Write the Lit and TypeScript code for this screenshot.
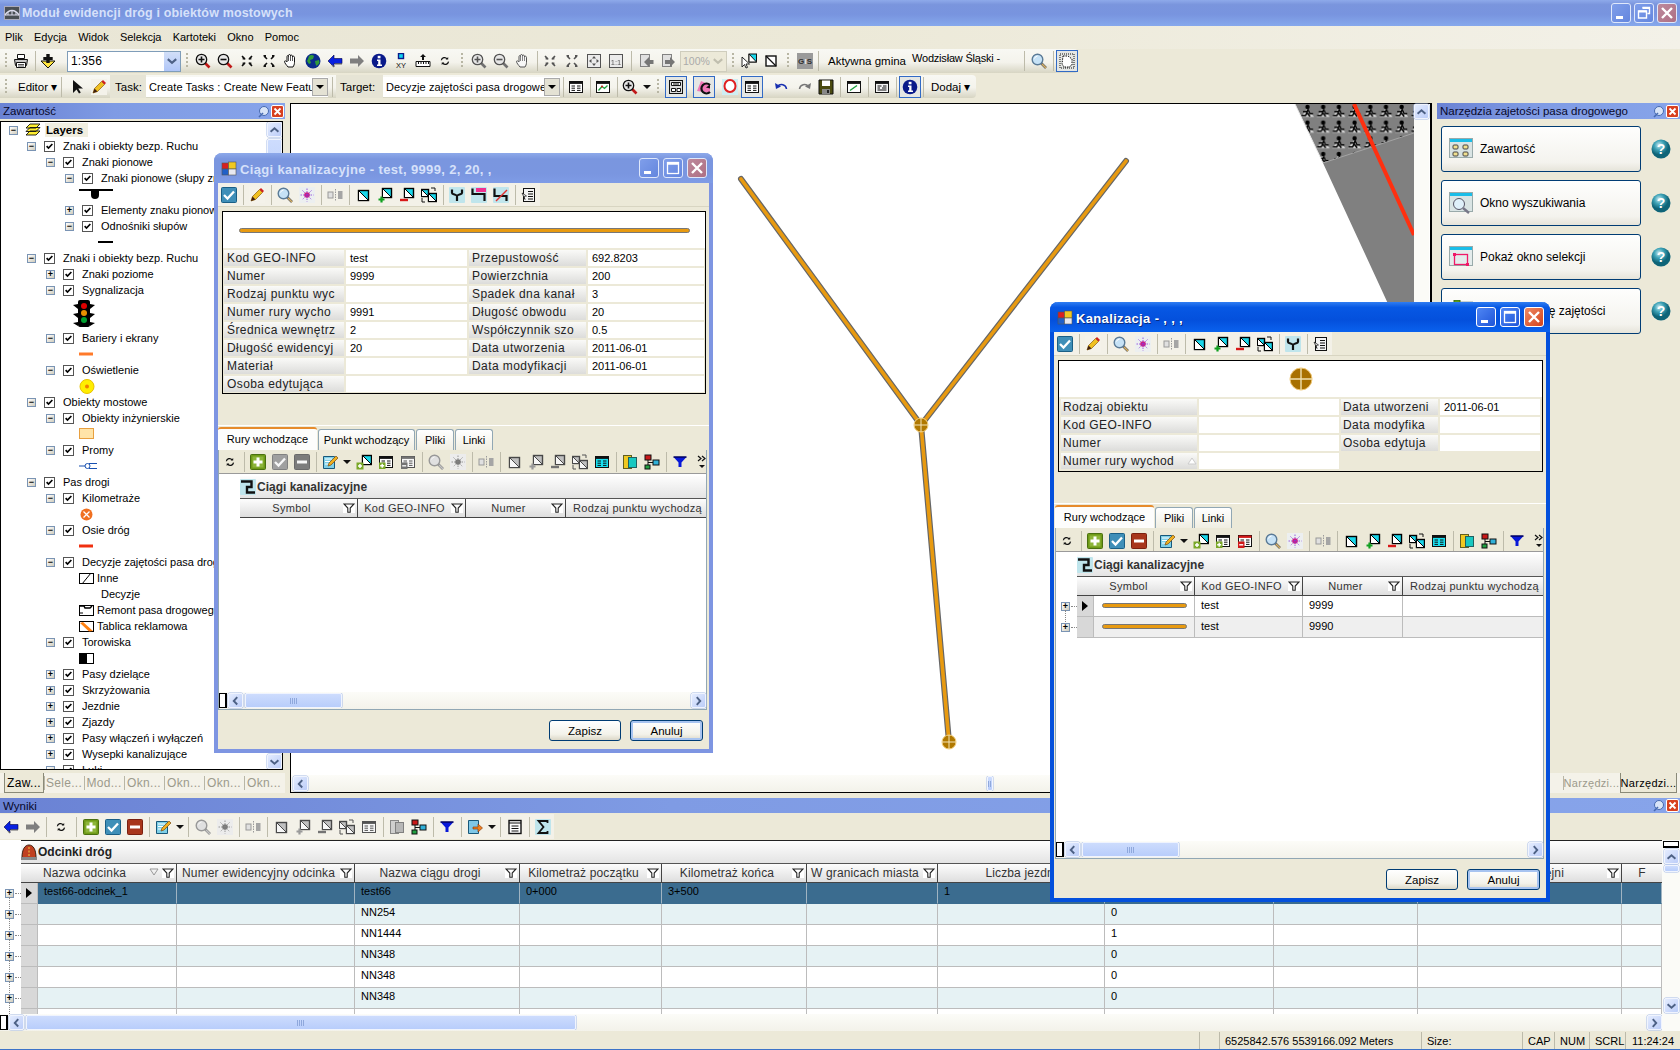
import { LitElement, html, css, svg, nothing, type TemplateResult } from "lit";
import { customElement } from "lit/decorators.js";

// toolbar and window glyphs, all drawn on a 16x16 box
const selBox = (x = 3, y = 3, s = 10) => svg`<rect x=${x + 0.5} y=${y + 0.5} width=${s} height=${s} fill="#19d6ea" stroke="#000" stroke-width="1.4"/><path d="M${x + 0.5} ${y + 0.5}L${x + s + 0.5} ${y + s + 0.5}H${x + 0.5}z" fill="#fff" stroke="#000"/>`;
const lensBody = (inner: TemplateResult | string = "") => svg`<path d="M10 10l4.5 4.5" stroke="#c01818" stroke-width="2.6"/><circle cx="6.5" cy="6.5" r="5.2" fill="#e8e8e8" stroke="#111" stroke-width="1.3"/>${inner}`;
const fourArrows = (dir: number) => svg`<g stroke="#111" stroke-width="1.6" fill="#111">${[[3, 3, 1, 1], [13, 3, -1, 1], [3, 13, 1, -1], [13, 13, -1, -1]].map(([x, y, a, b]) => svg`<path d="M${x} ${y}L${x + a * 3} ${y + b * 3}"/><path d="M${x + (dir > 0 ? a * 3.6 : -a)} ${y + (dir > 0 ? b * 3.6 : -b)}h${-a * (dir > 0 ? 3 : -3)}v${-b * (dir > 0 ? 3 : -3)}z" stroke="none"/>`)}</g>`;
const tealBack = svg`<rect x="0" y="0" width="16" height="16" rx="1" fill="#bfe5ec"/>`;
const tableBody = (fill: string, head = "#111") => svg`<rect x="1.5" y="2.5" width="13" height="11" fill=${fill} stroke="#111"/><rect x="1.5" y="2.5" width="13" height="2.4" fill=${head}/><path d="M3.5 7h3.5M9 7h3.5M3.5 9.2h3.5M9 9.2h3.5M3.5 11.4h3.5M9 11.4h3.5" stroke="#111"/>`;
const squareBtn = (a: string, b: string, mark: TemplateResult) => svg`<rect x="0.5" y="0.5" width="15" height="15" rx="1" fill=${a} stroke=${b}/>${mark}`;

const ICONS: Record<string, TemplateResult> = {
  print: svg`<path d="M4.5 1.5h7v4h-7z" fill="#fff" stroke="#111"/><path d="M1.5 6.5h13l-1 6h-11z" fill="#c8c8c8" stroke="#111"/><path d="M3.5 9.5h9v5h-9z" fill="#fff" stroke="#111"/><path d="M5 11.5h6M5 13h6" stroke="#555"/>`,
  dl: svg`<path d="M8 15L1 8h14z" fill="#ffe640" stroke="#111"/><path d="M6.3 1h3.4v3h3v3h-3v3H6.300v-3h-3V4h3z" fill="#111"/>`,
  zin: lensBody(svg`<path d="M3.500 6.500h6M6.500 3.500v6" stroke="#111" stroke-width="1.6"/>`),
  zout: lensBody(svg`<path d="M3.500 6.500h6" stroke="#111" stroke-width="1.6"/>`),
  fin: fourArrows(1),
  fout: fourArrows(-1),
  hand: svg`<path d="M5 14C3.500 12 1.500 10 1.500 8.500c0-1 1.500-.8 2.500.5V3.500c0-1.200 1.500-1.200 1.500 0V2.500c0-1.300 2-1.300 2 0V3c0-1.200 2-1.200 2 .2V4c0-1.200 2-1 2 .3v5c0 2-.7 3.500-1.500 4.700z" fill="#fff" stroke="#111"/><path d="M5.500 3.500V8M7.500 2.500V8M9.500 3V8" stroke="#111" stroke-width=".7"/>`,
  globe: svg`<circle cx="8" cy="8" r="7.500" fill="#0a2a8c"/><path d="M4 3c2-1.500 4-1 5 0l-1 3-3 1 1 3-2 1-2-3 1-2zM10 8l4-1 .5 3-3 3-1-2z" fill="#2f9a3a"/>`,
  back: svg`<path d="M1 8l6-6v3.500h8v5H7V14z" fill="#0820e0" stroke="#000040" stroke-width=".6"/><path d="M7 14l-2-2M8 11h7" stroke="#666" stroke-width="1.200"/>`,
  fwd: svg`<path d="M15 8L9 2v3.500H1v5h8V14z" fill="#7f7f7f"/>`,
  info: svg`<circle cx="8" cy="8" r="7.300" fill="#0a1a8a"/><rect x="6.700" y="2.800" width="2.800" height="2.500" fill="#fff"/><path d="M6 6.500h3.500v5H11v1.400H6v-1.400h1.200V8H6z" fill="#fff"/>`,
  xy: svg`<rect x="5.500" y="0.500" width="5" height="5" fill="#12d4f0" stroke="#0a1a8a" stroke-width="1.400"/><text x="8" y="14.500" font-size="7.500" text-anchor="middle" fill="#111">XY</text>`,
  ruler: svg`<path d="M8 1l3 3H9v3H7V4H5z" fill="#111"/><path d="M1 8.500h14v5H1z" fill="#fff" stroke="#111"/><path d="M3.500 8.500v2.500M6 8.500v2.500M8.500 8.500v2.500M11 8.500v2.500M13.500 8.500v2.500" stroke="#111"/>`,
  refresh: svg`<g transform="translate(2.200 2.200) scale(.72)"><path d="M3 7a4.500 4.500 0 0 1 8-2M13 9a4.500 4.500 0 0 1-8 2" fill="none" stroke="#111" stroke-width="1.700"/><path d="M12.500 2.500v3.500H9zM3.500 13.500V10H7z" fill="#111"/></g>`,
  fit: svg`<rect x="2.500" y="2.500" width="11" height="11" fill="none" stroke="#111" stroke-dasharray="2 1"/>${fourArrows(-1)}`,
  box4: svg`<rect x="1.500" y="1.500" width="13" height="13" fill="#eee" stroke="#111"/><path d="M8 3L6 5.500h4zM8 13l-2-2.500h4zM3 8l2.500-2v4zM13 8l-2.500-2v4z" fill="#111"/>`,
  one: svg`<rect x="1.500" y="1.500" width="13" height="13" fill="#eee" stroke="#111"/><text x="8" y="11.500" font-size="7.500" text-anchor="middle" fill="#111">1:1</text>`,
  prev: svg`<rect x="2.500" y="1.500" width="9" height="12" fill="#ddd" stroke="#555"/><path d="M6 9l5-5v3h4.500v4H11v3z" fill="#444"/>`,
  next: svg`<rect x="2.500" y="1.500" width="9" height="12" fill="#ddd" stroke="#555"/><path d="M15 9l-5-5v3H5v4h5v3z" fill="#444"/>`,
  selcur: svg`<path d="M1 4v10l2.500-2.500L5 15l1.500-.6L5 11h3.500z" fill="#fff" stroke="#111" stroke-width=".9"/><rect x="8" y="1" width="7.500" height="8" fill="#19d6ea" stroke="#111"/><path d="M8 1l7.500 8H8z" fill="#fff" stroke="#111"/>`,
  selsq: svg`<rect x="3" y="3" width="10" height="10" fill="#fff" stroke="#111" stroke-width="1.400"/><path d="M3 3l10 10" stroke="#111" stroke-width="1.200"/>`,
  gis: svg`<rect x="0" y="0" width="16" height="16" fill="#9a9a9a"/><text x="4" y="11" font-size="8" font-weight="700" text-anchor="middle" fill="#333">G</text><text x="8.500" y="11" font-size="8" font-weight="700" text-anchor="middle" fill="#eee">I</text><text x="12.500" y="11" font-size="8" font-weight="700" text-anchor="middle" fill="#333">S</text>`,
  lens: svg`<path d="M10 10l5 5" stroke="#666" stroke-width="2.600"/><path d="M11 11l4 4" stroke="#d8b060" stroke-width="1.200"/><circle cx="6.500" cy="6.500" r="5.300" fill="#c6e2f6" stroke="#5a7a96" stroke-width="1.400"/><path d="M3.500 5.500a3.500 3.500 0 0 1 3-2.500" stroke="#fff" fill="none"/>`,
  poly: svg`<path d="M4 3h5l4 3v6l-3 2H5l-2-3z" fill="#fff" stroke="#111" stroke-dasharray="1.500 1"/><rect x="1" y="1" width="14" height="14" fill="none" stroke="#111" stroke-dasharray="1 1"/>`,
  arrow: svg`<path d="M4 1v13l3.500-3.500 2.500 4 1.800-1-2.500-4H14z" fill="#111"/>`,
  pencil: svg`<rect x="0" y="0" width="16" height="16" fill="#f4f2ea"/><path d="M2 14l1.500-4.500 7-7 3 3-7 7z" fill="#f0c020" stroke="#8a5a10" stroke-width=".7"/><path d="M10.500 2.500l3 3 1.500-1.500-3-3z" fill="#d02020"/><path d="M2 14l1.500-4.500 3 3z" fill="#402010"/>`,
  table: tableBody("#fff"),
  chart: svg`<rect x="1.500" y="2.500" width="13" height="11" fill="#fff" stroke="#111"/><rect x="1.500" y="2.500" width="13" height="2.400" fill="#111"/><path d="M3.500 11.500L7 7.500l2.500 2 3-3" fill="none" stroke="#20a040" stroke-width="1.300"/><circle cx="7" cy="7.500" r="1" fill="#d02020"/>`,
  list1: svg`<rect x="1.500" y="1.500" width="13" height="13" fill="#ddd" stroke="#111"/><path d="M3.500 3.500h9v3h-9zM3.500 9.500h4v3h-4zM9 9.500h3.500v3H9z" fill="#fff" stroke="#111"/><path d="M5 5h6" stroke="#111"/>`,
  pink: svg`<path d="M1 12L5 2l9 4v8z" fill="#f078b8"/><path d="M14 6a5 5 0 1 0 0 7" fill="none" stroke="#111" stroke-width="2.200"/><path d="M10 8.500l4-3v4z" fill="#111"/>`,
  ring: svg`<rect x="0" y="0" width="16" height="16" fill="#cfeef2"/><ellipse cx="8" cy="7" rx="5.500" ry="6" fill="#fff" stroke="#e02020" stroke-width="2"/>`,
  undo: svg`<path d="M3.500 7.500a5 5 0 0 1 9 2.500" fill="none" stroke="#1830b0" stroke-width="1.500"/><path d="M1 4l1 6 5-2.500z" fill="#1830b0"/>`,
  redo: svg`<path d="M12.500 7.500a5 5 0 0 0-9 2.500" fill="none" stroke="#777" stroke-width="1.500"/><path d="M15 4l-1 6-5-2.500z" fill="#777"/>`,
  save: svg`<path d="M1 1h14v14H1z" fill="#4a4a10" stroke="#111"/><rect x="4" y="1.500" width="8" height="5.500" fill="#fff"/><rect x="4" y="10" width="8" height="5" fill="#888"/><rect x="9" y="11" width="2" height="3" fill="#222"/>`,
  wingreen: svg`<rect x="1.500" y="2.500" width="13" height="11" fill="#fff" stroke="#111"/><rect x="1.500" y="2.500" width="13" height="2.400" fill="#111"/><path d="M4 11.500l7-5" stroke="#20a040" stroke-width="1.500"/>`,
  winlist: svg`<rect x="1.500" y="2.500" width="13" height="11" fill="#f4f4f4" stroke="#111"/><rect x="1.500" y="2.500" width="13" height="2.400" fill="#111"/><path d="M3.500 7h4M9 7h3.500M3.500 9h2.500M8 9h4.500M3.500 11h9" stroke="#111"/>`,
  check: squareBtn("#3f8fb8", "#1a5f86", svg`<path d="M3 8l3.500 3.500L13 4.500" fill="none" stroke="#fff" stroke-width="2.300"/>`),
  plus: squareBtn("#6f9a18", "#4a7010", svg`<rect x="2.500" y="2.500" width="11" height="11" fill="#8db53a"/><path d="M8 3.500v9M3.500 8h9" stroke="#fff" stroke-width="3"/>`),
  minus: squareBtn("#a8361c", "#7a2010", svg`<path d="M3 8h10" stroke="#fff" stroke-width="3"/>`),
  star: svg`<rect x="0" y="0" width="16" height="16" fill="#eceff0"/><circle cx="8" cy="8" r="2.800" fill="#d81878"/><path d="M8 1.500v13M1.500 8h13M3.500 3.500l9 9M12.500 3.500l-9 9" stroke="#8838d8" stroke-width=".8" stroke-dasharray="1.500 1"/>`,
  split: svg`<rect x="1" y="5" width="5" height="6" fill="#ddd" stroke="#777"/><rect x="11" y="4" width="4.500" height="8" fill="#888"/><path d="M8.500 2v12" stroke="#777" stroke-dasharray="1.500 1"/>`,
  sel: selBox(),
  selplus: svg`${selBox(5, 1, 9)}<path d="M4.500 9.500v6M1.500 12.500h6" stroke="#10a020" stroke-width="2.200"/>`,
  selminus: svg`${selBox(5, 1, 9)}<path d="M1 13h8" stroke="#d81818" stroke-width="2.400"/>`,
  selswap: svg`${selBox(0, 2, 7)}${selBox(7, 6, 8)}<path d="M10 1h4v3M1 11v4h3" fill="none" stroke="#111"/>`,
  fork: svg`${tealBack}<path d="M3 2.500v3.500c0 1.500 5 1.500 5 3 0-1.500 5-1.500 5-3V2.500M8 9v5" fill="none" stroke="#111" stroke-width="2.200"/>`,
  pipe100: svg`${tealBack}<rect x="5" y="1" width="10" height="4" fill="#f03090"/><path d="M1.500 1.500v5.500h12v7" fill="none" stroke="#111" stroke-width="2.200"/>`,
  pipex: svg`${tealBack}<path d="M1.500 1.500V9h12v5" fill="none" stroke="#111" stroke-width="2.200"/><path d="M3 14L14 3" stroke="#e03030" stroke-width="1.500"/>`,
  listarrow: svg`<rect x="2.500" y="1.500" width="11" height="13" fill="#f4f4f4" stroke="#111"/><path d="M7 4.500h5M7 7h5M7 9.500h5M7 12h5" stroke="#111"/><path d="M1 6l4.500 3L3 9.500l1 3z" fill="#fff" stroke="#111" stroke-width=".7"/>`,
  edit: svg`<path d="M1.500 2.500h11v12h-11z" fill="#7fd0e8" stroke="#18587a"/><path d="M3 5h7M3 7.500h5M3 10h4" stroke="#fff"/><path d="M6 12l1-3 7-7 2 2-7 7z" fill="#f0b020" stroke="#7a4a10" stroke-width=".7"/>`,
  addsel: svg`${selBox(6, 1, 9)}<rect x="0.500" y="8.500" width="7" height="7" fill="#7aa828"/><path d="M4 10v4M2 12h4" stroke="#fff" stroke-width="1.500"/>`,
  tblplus: svg`${tableBody("#fff")}<rect x="1" y="8.500" width="6.500" height="6.500" fill="#7aa828"/><path d="M4.200 9.800v4M2.200 11.800h4" stroke="#fff" stroke-width="1.400"/>`,
  tblminus: svg`${tableBody("#fff", "#d01818")}<rect x="1" y="8.500" width="6.500" height="6.500" fill="#d01818"/><path d="M2.200 11.800h4" stroke="#fff" stroke-width="1.400"/>`,
  tblcyan: tableBody("#18e0f0"),
  cols: svg`<rect x="1.500" y="1.500" width="8" height="13" fill="#f0c820" stroke="#606020"/><rect x="6.500" y="3.500" width="8" height="10" fill="#18c8c0" stroke="#206060"/>`,
  tree: svg`<rect x="1" y="1" width="6" height="5" fill="#c81818" stroke="#111"/><rect x="1" y="11" width="5" height="4" fill="#20a040" stroke="#111"/><rect x="9" y="6" width="6" height="5" fill="#30b0d8" stroke="#111"/><path d="M4 6v5M4 8.500h5" stroke="#111"/>`,
  funnel: svg`<path d="M1.500 3h13L9.500 8.500V13h-3V8.500z" fill="#0818d8"/><path d="M1.500 3h13" stroke="#000060" stroke-width="1.500"/>`,
  more: svg`<path d="M4 2l3 2.500L4 7M8 2l3 2.500L8 7" fill="none" stroke="#111" stroke-width="1.200"/><path d="M5 11h6l-3 3z" fill="#111"/>`,
  exportdoc: svg`<path d="M1.500 1.500h10v13h-10z" fill="#7fc8e8" stroke="#18587a"/><path d="M6 8h5V5l4.500 4-4.500 4v-3H6z" fill="#f08020" stroke="#803000" stroke-width=".6"/>`,
  sheet: svg`<rect x="2" y="1.500" width="12" height="13" fill="#fff" stroke="#111" stroke-width="1.400"/><path d="M2 4h12M4.500 7h7M4.500 9.500h7M4.500 12h7" stroke="#111"/>`,
  sigma: svg`${tealBack}<path d="M12.500 4V2H3.500l5 6-5 6h9v-2" fill="none" stroke="#111" stroke-width="1.800"/>`,
  pipe: svg`${tealBack}<path d="M1 2.500h10.500V8H7v5.500h8" fill="none" stroke="#111" stroke-width="2.400"/>`,
  road: svg`<path d="M1 14c0-9 3-13 7-13s7 4 7 13z" fill="#c04020" stroke="#402010"/><path d="M8 3v11" stroke="#f0d040" stroke-dasharray="2 1.500"/><rect x="0" y="13" width="16" height="3" fill="#888"/>`,
  appwin: svg`<rect x="1" y="2" width="6.500" height="6" fill="#d82020" stroke="#555" stroke-width=".6"/><rect x="7.500" y="1" width="7.500" height="7" fill="#f0c820" stroke="#555" stroke-width=".6"/><rect x="1" y="8" width="6.500" height="6" fill="#2060c8" stroke="#555" stroke-width=".6"/><rect x="7.500" y="8" width="7.500" height="6" fill="#e8e8f0" stroke="#555" stroke-width=".6"/>`,
  bridge: svg`<rect x="0.500" y="1.500" width="15" height="13" fill="#4a4f54" stroke="#aab"/><path d="M1 10c4-6 10-6 14 0" fill="none" stroke="#dde" stroke-width="1.400"/><path d="M1 10h14M4 7v3M8 5.500V10M12 7v3" stroke="#dde"/>`,
};

type ToolItem = string | TemplateResult;

function ic(name: string, cls = "") {
  return html`<svg class="ic ${cls}" viewBox="0 0 16 16">${ICONS[name]}</svg>`;
}

// tokens: name, ~name disabled, *name selected, | separator, :grip, _gap, ^ dropdown arrow
function tools(items: ToolItem[]) {
  return items.map((it) => {
    if (typeof it !== "string") return it;
    const n = parseInt(it.slice(1), 10);
    if (it[0] === "|") return html`<i class="sep" style="width:${n || 6}px"></i>`;
    if (it[0] === ":") return html`<i class="grip" style="width:${n || 11}px"></i>`;
    if (it[0] === "_") return html`<i class="gap" style="width:${n}px"></i>`;
    if (it === "^") return html`<i class="drop"></i>`;
    if (it[0] === "~") return html`<span class="btn dis">${ic(it.slice(1))}</span>`;
    if (it[0] === "*") return html`<span class="btn on">${ic(it.slice(1))}</span>`;
    return html`<span class="btn">${ic(it)}</span>`;
  });
}

function scrollH(thumbFrom: number, thumbW: number, corner = true) {
  return html`<div class="hs">
    ${corner ? html`<i class="hs-corner"></i>` : nothing}
    <span class="sb-btn">${chevron("left")}</span>
    <span class="hs-track"><span class="sb-thumb" style="margin-left:${thumbFrom}px;width:${thumbW}px"><i class="hs-grip"></i></span></span>
    <span class="sb-btn">${chevron("right")}</span>
  </div>`;
}

function chevron(d: "left" | "right" | "up" | "down") {
  const p = { left: "M9.500 3L5.500 7.500l4 4", right: "M5.500 3l4 4.500-4 4.500", up: "M3 9.500l4.500-4 4.500 4", down: "M3 5.500l4.500 4 4.500-4" }[d];
  return html`<svg class="chev" viewBox="0 0 15 15"><path d=${p} fill="none" stroke="#4d6185" stroke-width="2.200"/></svg>`;
}

const filterIcon = html`<svg class="flt" viewBox="0 0 12 10"><rect width="12" height="10" fill="#fff"/><path d="M1 1h10L7.200 5v4.300H4.800V5z" fill="none" stroke="#222" stroke-width="1.100"/></svg>`;
const sortIcon = html`<svg class="flt" viewBox="0 0 12 10"><path d="M2 1h8L6 7z" fill="none" stroke="#999"/></svg>`;
const orangeLine = html`<i class="oline"></i>`;

interface Col { label: string; w: number; flt?: boolean; sort?: boolean; end?: boolean; left?: boolean; }

function cols(list: Col[]) {
  return list.map((c) => `${c.w}px`).join(" ");
}

function gridHead(list: Col[], sel: number) {
  const tpl = [sel + list[0].w, ...list.slice(1).map((c) => c.w)].map((v) => `${v}px`).join(" ");
  return html`<div class="g-head" style="grid-template-columns:${tpl}">
    ${list.map((c) => html`<div class="hc ${c.end ? "end" : ""} ${c.left ? "left" : ""}"><span class="hl">${c.label}</span>${c.sort ? sortIcon : nothing}${c.flt ? filterIcon : nothing}</div>`)}
  </div>`;
}

function gridRow(list: Col[], sel: number, cells: (string | TemplateResult)[], cls: string, current: boolean, last: boolean) {
  return html`<div class="g-row ${cls}">
    <div class="gut ${last ? "last" : ""}"><i class="exp">+</i></div>
    <div class="g-cells" style="grid-template-columns:${sel}px ${cols(list)}">
      <div class="rsel">${current ? html`<i class="tri"></i>` : nothing}</div>
      ${cells.map((c) => html`<div class="gc">${c}</div>`)}
    </div>
  </div>`;
}

function titleButtons(active: boolean, restore = false) {
  return html`<div class="tbtns ${active ? "act" : ""}">
    <span class="tb"><svg viewBox="0 0 18 18"><rect x="4" y="12" width="7" height="3" fill="#fff"/></svg></span>
    <span class="tb"><svg viewBox="0 0 18 18">${restore
      ? svg`<path d="M7.500 3.500h7v6h-2M3.500 7h8v7h-8z" fill="none" stroke="#fff" stroke-width="1.400"/><path d="M3.500 7.500h8M7.500 4h7" stroke="#fff" stroke-width="2"/>`
      : svg`<rect x="3.500" y="3.500" width="11" height="11" fill="none" stroke="#fff" stroke-width="1.300"/><path d="M3.500 4.500h11" stroke="#fff" stroke-width="2.500"/>`}</svg></span>
    <span class="tb x"><svg viewBox="0 0 18 18"><path d="M4 4l10 10M14 4L4 14" stroke="#fff" stroke-width="2.400"/></svg></span>
  </div>`;
}

const dockBtns = html`<span class="dock-btns">
  <svg viewBox="0 0 13 13"><circle cx="7" cy="6" r="4.500" fill="#d8e4f8" stroke="#466ab0"/><path d="M2 12l4-4" stroke="#466ab0" stroke-width="1.600"/></svg>
  <svg viewBox="0 0 13 13"><rect x=".5" y=".5" width="12" height="12" rx="1.500" fill="#d84020" stroke="#fff"/><path d="M3.500 3.500l6 6M9.500 3.500l-6 6" stroke="#fff" stroke-width="1.800"/></svg>
</span>`;

type Leaf = { lvl: number; exp?: "+" | "-"; text: string; check?: boolean; bold?: boolean; sym?: string; tall?: boolean };
const TREE: Leaf[] = [
  { lvl: 1, exp: "-", check: true, text: "Znaki i obiekty bezp. Ruchu" },
  { lvl: 2, exp: "-", check: true, text: "Znaki pionowe" },
  { lvl: 3, exp: "-", check: true, text: "Znaki pionowe (słupy znaków)" },
  { lvl: 0, text: "", sym: "post" },
  { lvl: 3, exp: "+", check: true, text: "Elementy znaku pionowego" },
  { lvl: 3, exp: "-", check: true, text: "Odnośniki słupów" },
  { lvl: 0, text: "", sym: "refline" },
  { lvl: 1, exp: "-", check: true, text: "Znaki i obiekty bezp. Ruchu" },
  { lvl: 2, exp: "+", check: true, text: "Znaki poziome" },
  { lvl: 2, exp: "-", check: true, text: "Sygnalizacja" },
  { lvl: 0, text: "", sym: "lights", tall: true },
  { lvl: 2, exp: "-", check: true, text: "Bariery i ekrany" },
  { lvl: 0, text: "", sym: "orange" },
  { lvl: 2, exp: "-", check: true, text: "Oświetlenie" },
  { lvl: 0, text: "", sym: "lamp" },
  { lvl: 1, exp: "-", check: true, text: "Obiekty mostowe" },
  { lvl: 2, exp: "-", check: true, text: "Obiekty inżynierskie" },
  { lvl: 0, text: "", sym: "engbox" },
  { lvl: 2, exp: "-", check: true, text: "Promy" },
  { lvl: 0, text: "", sym: "ferry" },
  { lvl: 1, exp: "-", check: true, text: "Pas drogi" },
  { lvl: 2, exp: "-", check: true, text: "Kilometraże" },
  { lvl: 0, text: "", sym: "km" },
  { lvl: 2, exp: "-", check: true, text: "Osie dróg" },
  { lvl: 0, text: "", sym: "axis" },
  { lvl: 2, exp: "-", check: true, text: "Decyzje zajętości pasa drogowego" },
  { lvl: 0, text: "Inne", sym: "hatch" },
  { lvl: 0, text: "Decyzje", sym: "blank" },
  { lvl: 0, text: "Remont pasa drogowego", sym: "repair" },
  { lvl: 0, text: "Tablica reklamowa", sym: "board" },
  { lvl: 2, exp: "-", check: true, text: "Torowiska" },
  { lvl: 0, text: "", sym: "rail" },
  { lvl: 2, exp: "+", check: true, text: "Pasy dzielące" },
  { lvl: 2, exp: "+", check: true, text: "Skrzyżowania" },
  { lvl: 2, exp: "+", check: true, text: "Jezdnie" },
  { lvl: 2, exp: "+", check: true, text: "Zjazdy" },
  { lvl: 2, exp: "+", check: true, text: "Pasy włączeń i wyłączeń" },
  { lvl: 2, exp: "+", check: true, text: "Wysepki kanalizujące" },
  { lvl: 2, exp: "-", check: true, text: "Łuki" },
];

const SYMS: Record<string, TemplateResult> = {
  post: html`<svg class="sym" width="34" height="14" viewBox="0 0 34 14"><path d="M0 3h34" stroke="#000" stroke-width="2"/><path d="M12 3h8v5a4 4 0 0 1-8 0z" fill="#000"/></svg>`,
  refline: html`<svg class="sym s-ref" width="15" height="14" viewBox="0 0 15 14"><path d="M0 7h15" stroke="#000" stroke-width="2"/></svg>`,
  lights: html`<svg class="sym s-light" width="22" height="30" viewBox="0 0 22 30"><rect x="5" y="1" width="12" height="27" rx="2" fill="#000"/><path d="M0 6l5-1v5zM22 6l-5-1v5zM0 15l5-1v5zM22 15l-5-1v5zM0 24l5-1v4zM22 24l-5-1v4z" fill="#000"/><circle cx="11" cy="7" r="3" fill="#e00000"/><circle cx="11" cy="14" r="3" fill="#e89000"/><circle cx="11" cy="21" r="3" fill="#00a030"/></svg>`,
  orange: html`<svg class="sym" width="15" height="14" viewBox="0 0 15 14"><path d="M0 7h14" stroke="#ff7a2a" stroke-width="3"/></svg>`,
  lamp: html`<svg class="sym" width="16" height="15" viewBox="0 0 16 15"><circle cx="8" cy="7.500" r="7" fill="#ffee00" stroke="#e8c000"/><circle cx="8" cy="7.500" r="2" fill="#f08000"/></svg>`,
  engbox: html`<svg class="sym" width="16" height="12" viewBox="0 0 16 12"><rect x=".5" y=".5" width="14" height="10" fill="#ffe4a8" stroke="#e8a040"/></svg>`,
  ferry: html`<svg class="sym" width="18" height="12" viewBox="0 0 18 12"><path d="M0 6h7M10 3.500h8M10 8.500h8" stroke="#1850b0" stroke-width="1.200" fill="none"/><circle cx="8.500" cy="6" r="2.500" fill="#fff" stroke="#1850b0"/></svg>`,
  km: html`<svg class="sym s-km" width="13" height="13" viewBox="0 0 13 13"><circle cx="6.500" cy="6.500" r="6" fill="#f07020"/><path d="M3.500 3.500l6 6M9.500 3.500l-6 6" stroke="#fff" stroke-width="1.300"/></svg>`,
  axis: html`<svg class="sym" width="15" height="14" viewBox="0 0 15 14"><path d="M0 7h14" stroke="#f03010" stroke-width="3"/></svg>`,
  hatch: html`<svg class="sym" width="15" height="11" viewBox="0 0 15 11"><rect x=".5" y=".5" width="14" height="10" fill="#fff" stroke="#000"/><path d="M3 11L12 0" stroke="#000"/></svg>`,
  blank: html`<svg class="sym" width="15" height="11" viewBox="0 0 15 11"></svg>`,
  repair: html`<svg class="sym" width="15" height="11" viewBox="0 0 15 11"><rect x=".5" y=".5" width="14" height="10" fill="#fff" stroke="#000"/><path d="M1 1h4l1 2h5l2-2" stroke="#000" stroke-width="1.500" fill="none"/><path d="M1 8h3" stroke="#000"/></svg>`,
  board: html`<svg class="sym" width="15" height="11" viewBox="0 0 15 11"><rect x=".5" y=".5" width="14" height="10" fill="#fff" stroke="#000"/><path d="M1 2l3-1 10 9-4 .5z" fill="#ff8010"/></svg>`,
  rail: html`<svg class="sym" width="15" height="11" viewBox="0 0 15 11"><rect x=".5" y=".5" width="14" height="10" fill="#fff" stroke="#000"/><rect x="1" y="1" width="7" height="9" fill="#000"/></svg>`,
};

function treeRow(l: Leaf) {
  if (l.sym) {
    return html`<div class="tr ${l.tall ? "tall" : ""} sym-row">${SYMS[l.sym]}${l.text ? html`<span class="legend ${l.sym === "blank" ? "far" : ""}">${l.text}</span>` : nothing}</div>`;
  }
  return html`<div class="tr" style="padding-left:${7 + 19 * l.lvl}px">
    <i class="exp">${l.exp === "-" ? "−" : "+"}</i>
    <i class="cbx"><svg viewBox="0 0 11 11"><path d="M2 5l2.300 2.500L9 2.500" fill="none" stroke="#000" stroke-width="2"/></svg></i>
    <span class="tt">${l.text}</span>
  </div>`;
}

const HELP = html`<svg class="help" viewBox="0 0 20 20"><defs><radialGradient id="hg" cx=".4" cy=".3"><stop offset="0" stop-color="#cfeaf0"/><stop offset=".5" stop-color="#3fa4b8"/><stop offset="1" stop-color="#0e6478"/></radialGradient></defs><circle cx="10" cy="10" r="9.500" fill="url(#hg)"/><text x="10" y="15" font-size="14" font-weight="700" text-anchor="middle" fill="#fff">?</text></svg>`;

const TASK_ICONS = {
  content: svg`<rect x=".5" y=".5" width="23" height="19" fill="#d9e4e4" stroke="#9aa"/><rect x="1" y="1" width="22" height="3" fill="#19bde8"/><rect x="4" y="7" width="5" height="4" rx="1" fill="#f0e090" stroke="#444"/><rect x="14" y="7" width="5" height="4" rx="1" fill="#f0e090" stroke="#444"/><rect x="4" y="14" width="5" height="4" rx="1" fill="#f0e090" stroke="#444"/><rect x="14" y="14" width="5" height="4" rx="1" fill="#f0e090" stroke="#444"/>`,
  search: svg`<rect x=".5" y=".5" width="23" height="19" fill="#d9e4e4" stroke="#9aa"/><rect x="1" y="1" width="22" height="3" fill="#19bde8"/><circle cx="10" cy="12" r="5.500" fill="#dff0fa" stroke="#556"/><path d="M14 16l6 5" stroke="#778" stroke-width="2.400"/>`,
  sel: svg`<rect x=".5" y=".5" width="23" height="19" fill="#e4ecec" stroke="#9aa"/><rect x="1" y="1" width="22" height="3" fill="#19bde8"/><rect x="5.500" y="8.500" width="13" height="10" fill="none" stroke="#f01868" stroke-width="1.300"/><rect x="4" y="7" width="3" height="3" fill="#f01868"/><rect x="17" y="17" width="3" height="3" fill="#f01868"/>`,
  add: svg`<rect x="9" y="2" width="15" height="17" fill="#e4ecec" stroke="#9aa"/><path d="M5 0h6v5h5v6h-5v5H5v-5H0V5h5z" fill="#5a9a18" stroke="#3a6a10"/>`,
};

const MENU = ["Plik", "Edycja", "Widok", "Selekcja", "Kartoteki", "Okno", "Pomoc"];
const DOCK_TABS = ["Zaw...", "Sele...", "Mod...", "Okn...", "Okn...", "Okn...", "Okn..."];

const PIPE_FORM: [string, string, string?, string?][] = [
  ["Kod GEO-INFO", "test", "Przepustowość", "692.8203"],
  ["Numer", "9999", "Powierzchnia", "200"],
  ["Rodzaj punktu wyc", "", "Spadek dna kanał", "3"],
  ["Numer rury wycho", "9991", "Długość obwodu", "20"],
  ["Średnica wewnętrz", "2", "Współczynnik szo", "0.5"],
  ["Długość ewidencyj", "20", "Data utworzenia", "2011-06-01"],
  ["Materiał", "", "Data modyfikacji", "2011-06-01"],
];

const NODE_FORM: [string, string, string?, string?][] = [
  ["Rodzaj obiektu", "", "Data utworzeni", "2011-06-01"],
  ["Kod GEO-INFO", "", "Data modyfika", ""],
  ["Numer", "", "Osoba edytuja", ""],
];

const WIN_TOOLS_A: ToolItem[] = ["check", "|", "pencil", "|", "lens", "star", "|", "~split", "|", "sel", "selplus", "selminus", "selswap", "|", "fork", "pipe100", "pipex", "|", "listarrow"];
const WIN_TOOLS_B: ToolItem[] = ["check", "|", "pencil", "|", "lens", "star", "|", "~split", "|", "sel", "selplus", "selminus", "selswap", "|", "fork", "|", "listarrow"];
const TAB_TOOLS_DIS: ToolItem[] = ["refresh", "|", "plus", "~check", "~minus", "|", "edit", "^", "addsel", "tblplus", "~tblminus", "|", "~lens", "~star", "|", "~split", "|", "~sel", "~selplus", "~selminus", "~selswap", "tblcyan", "|", "cols", "tree", "|", "funnel", "more"];
const TAB_TOOLS_ON: ToolItem[] = ["refresh", "|", "plus", "check", "minus", "|", "edit", "^", "addsel", "tblplus", "tblminus", "|", "lens", "star", "|", "~split", "|", "sel", "selplus", "selminus", "selswap", "tblcyan", "|", "cols", "tree", "|", "funnel", "more"];
const RESULT_TOOLS: ToolItem[] = ["back", "fwd", "|4", "_2", "refresh", "_2", "|4", "_2", "plus", "check", "minus", "|", "edit", "^", "|4", "_2", "~lens", "~star", "|", "~split", "|", "~sel", "~selplus", "~selminus", "~selswap", "~table", "|", "~cols", "tree", "|", "funnel", "|", "exportdoc", "^", "|4", "_2", "sheet", "|", "sigma"];

const PIPE_COLS: Col[] = [
  { label: "Symbol", w: 101, flt: true },
  { label: "Kod GEO-INFO", w: 108, flt: true },
  { label: "Numer", w: 100, flt: true },
  { label: "Rodzaj punktu wychodzą", w: 160, left: true },
];

const ROAD_COLS: Col[] = [
  { label: "Nazwa odcinka", w: 139, flt: true, sort: true },
  { label: "Numer ewidencyjny odcinka", w: 178, flt: true },
  { label: "Nazwa ciągu drogi", w: 165, flt: true },
  { label: "Kilometraż początku", w: 142, flt: true },
  { label: "Kilometraż końca", w: 145, flt: true },
  { label: "W granicach miasta", w: 131, flt: true },
  { label: "Liczba jezdni", w: 167 },
  { label: "", w: 169 },
  { label: "", w: 144 },
  { label: "Kolejni", w: 204, flt: true, end: true },
  { label: "F", w: 40 },
];

const ROAD_ROWS = [
  ["test66-odcinek_1", "", "test66", "0+000", "3+500", "", "1", "", "", "", ""],
  ["", "", "NN254", "", "", "", "", "0", "", "", ""],
  ["", "", "NN1444", "", "", "", "", "1", "", "", ""],
  ["", "", "NN348", "", "", "", "", "0", "", "", ""],
  ["", "", "NN348", "", "", "", "", "0", "", "", ""],
  ["", "", "NN348", "", "", "", "", "0", "", "", ""],
  ["", "", "", "", "", "", "", "", "", "", ""],
];

@customElement("app-root")
export class AppRoot extends LitElement {
  static styles = css`
    :host {
      display: block;
      position: relative;
      width: 1680px;
      height: 1050px;
      overflow: hidden;
      background: #ece9d8;
      font-family: "Liberation Sans", Arial, sans-serif;
      font-size: 11px;
      color: #000;
    }
    * { box-sizing: border-box; }
    i { font-style: normal; display: block; }
    svg text { font-family: "Liberation Sans", Arial, sans-serif; }
    .shell { display: flex; flex-direction: column; height: 1050px; }

    .titlebar {
      height: 26px;
      flex: none;
      display: flex;
      align-items: center;
      padding: 0 3px 0 4px;
      background: linear-gradient(#8eaaea 0, #7a95dd 18%, #7894df 55%, #86a8ec 100%);
    }
    .titlebar .ic { width: 16px; height: 16px; margin-right: 2px; }
    .apptitle {
      flex: 1;
      font: bold 12.5px "Liberation Sans", Arial, sans-serif;
      letter-spacing: 0.15px;
      color: #d6e1fa;
    }
    .tbtns { display: flex; gap: 3px; }
    .tb {
      width: 20px;
      height: 20px;
      border: 1px solid #dfe8fb;
      border-radius: 3px;
      background: linear-gradient(135deg, #7f9eea, #6486de);
    }
    .tb svg { display: block; width: 18px; height: 18px; }
    .tb.x { background: linear-gradient(135deg, #bd8a9c, #ae6f84); }
    .tbtns.act .tb { background: linear-gradient(135deg, #4f86f4, #1f55d8); border-color: #fff; }
    .tbtns.act .tb.x { background: linear-gradient(135deg, #ee8a64, #d4421c); }

    .menubar {
      height: 23px;
      flex: none;
      display: flex;
      align-items: center;
      gap: 11.2px;
      padding: 0 0 2px 5px;
      font-size: 11px;
      background: linear-gradient(90deg, #e9e6d6, #ece9d8 50%, #f3f1e8);
    }

    .toolrow {
      flex: none;
      display: flex;
      align-items: center;
      height: 24px;
      border-radius: 0 4px 4px 0;
      background: linear-gradient(#f8f8f3 0, #f4f3ec 55%, #d7d5c3 100%);
    }
    .tr1 { width: 1078px; }
    .tr2 { width: 976px; margin-top: 2px; height: 23px; }
    .btn {
      flex: none;
      width: 22px;
      height: 22px;
      display: flex;
      align-items: center;
      justify-content: center;
    }
    .btn.on { border: 1px solid #316ac5; background: #e4e6e4; }
    .btn.dis .ic { filter: grayscale(1) contrast(0.55) brightness(1.25); }
    .ic { width: 16px; height: 16px; display: block; flex: none; }
    .sep { flex: none; height: 20px; position: relative; }
    .sep::after { content: ""; position: absolute; left: 50%; top: 0; bottom: 0; width: 1px; background: #bdbbaa; }
    .grip { flex: none; height: 20px; position: relative; }
    .grip::after {
      content: "";
      position: absolute;
      left: 45%;
      top: 2px;
      bottom: 2px;
      width: 2px;
      background: repeating-linear-gradient(#b8b6a4 0 2px, transparent 2px 4px);
    }
    .gap { flex: none; }
    .drop { flex: none; height: 4px; border: 4px solid transparent; border-top-color: #111; border-bottom: 0; width: 0; margin: 0 2px 0 2px; }
    .tl { flex: none; white-space: nowrap; font-size: 11.5px; }
    .tl-active { width: 73px; }
    .tl-commune { width: 86px; font-size: 11px; letter-spacing: -0.2px; margin-bottom: 6px; }
    .tl-editor { width: 35px; }
    .tl-add { width: 38px; }
    .combo {
      flex: none;
      height: 21px;
      display: flex;
      align-items: center;
      background: #fff;
      border: 1px solid #7f9db9;
      font-size: 12px;
      padding-left: 3px;
    }
    .combo span { flex: 1; overflow: hidden; white-space: nowrap; letter-spacing: 0.2px; }
    .combo .cb { flex: none; width: 16px; height: 19px; background: linear-gradient(#d2dff8, #b0c6f8); display: flex; align-items: center; justify-content: center; }
    .combo.zoomc { width: 114px; }
    .combo.pct { width: 47px; border-color: #cfcdbd; color: #aaa; background: #ece9d8; font-size: 10.5px; padding-left: 2px; }
    .combo.pct span { letter-spacing: 0; }
    .combo.pct .cb { background: #ece9d8; }
    .combo.pct .chev path { stroke: #c0beae; }
    .dd { flex: none; display: flex; height: 20px; align-items: center; background: #fff; font-size: 11px; letter-spacing: 0.1px; padding-left: 3px; }
    .dd span { flex: 1; overflow: hidden; white-space: nowrap; }
    .dd b { flex: none; width: 16px; height: 18px; background: #e4e2d4; border: 1px solid #aaa; position: relative; }
    .dd b::after { content: ""; position: absolute; left: 3px; top: 6px; border: 4px solid transparent; border-top-color: #000; }
    .dd.task { width: 182px; }
    .dd.target { width: 177px; }
    .lab { flex: none; height: 23px; display: flex; align-items: center; background: #e6e4d5; font-size: 11.5px; padding-left: 5px; }
    .lab.task { width: 36px; }
    .lab.target { width: 47px; padding-left: 4px; }
    .tool-row-gap { height: 5px; flex: none; }
    .chev { width: 14px; height: 14px; display: block; }

    .dockrow { flex: none; height: 690px; display: flex; gap: 5px; }
    .panel { display: flex; flex-direction: column; }
    .panel.left { width: 285px; }
    .panel.right { width: 243px; }
    .dockhead {
      height: 16px;
      flex: none;
      display: flex;
      align-items: center;
      justify-content: space-between;
      padding: 0 1px 0 3px;
      font-size: 11.5px;
      color: #08082a;
      background: linear-gradient(90deg, #6a82d4, #7f9be4 40%, #87a4ea);
    }
    .dock-btns { display: flex; gap: 1px; }
    .dock-btns svg { width: 13px; height: 13px; display: block; }

    .treebox {
      height: 650px;
      margin-top: 2px;
      margin-right: 2px;
      border: 1px solid #000;
      background: #fff;
      display: flex;
      overflow: hidden;
    }
    .tree { flex: 1; overflow: hidden; }
    .tr {
      height: 16px;
      display: flex;
      align-items: center;
      white-space: nowrap;
      font-size: 11px;
    }
    .tr.tall { height: 32px; }
    .sym-row { padding-left: 78px; }
    .sym { display: block; flex: none; }
    .s-ref { margin-left: 19px; }
    .s-light { margin-left: -6px; margin-top: 0; }
    .s-km { margin-left: 1px; }
    .legend { margin-left: 3px; }
    .legend.far { margin-left: 7px; }
    .exp {
      flex: none;
      width: 9px;
      height: 9px;
      border: 1px solid #7a94b4;
      background: linear-gradient(135deg, #fff, #d0ccbc);
      font-size: 9px;
      line-height: 7px;
      text-align: center;
      font-weight: 700;
    }
    .cbx { flex: none; width: 11px; height: 11px; margin: 0 8px; border: 1px solid #555; background: #fff; }
    .cbx svg { display: block; width: 9px; height: 9px; }
    .layers-row { padding-left: 8px; }
    .layers-row .ic { margin-left: 7px; }
    .layers-name { font-weight: 700; background: #f0eee0; padding: 1px 5px 1px 1px; margin-left: 4px; font-size: 11.5px; }

    .vs { flex: none; width: 15px; display: flex; flex-direction: column; background: #fbfbf7; }
    .sb-btn {
      flex: none;
      width: 15px;
      height: 15px;
      background: linear-gradient(135deg, #e4ecfe, #bccdf8);
      border: 1px solid #f0f4fe;
      border-radius: 2px;
      box-shadow: 0 0 0 0.5px #a6bbe8;
      display: flex;
      align-items: center;
      justify-content: center;
    }
    .sb-fill { flex: 1; }
    .sb-thumb { display: block; height: 15px; background: linear-gradient(#cddcfd, #b8cdfb); border: 1px solid #f0f4fe; border-radius: 2px; box-shadow: 0 0 0 0.5px #a6bbe8; position: relative; overflow: hidden; }
    .vthumb { flex: none; height: 60px; width: 15px; margin-top: 2px; }
    .hs { flex: none; height: 17px; display: flex; align-items: center; background: linear-gradient(#fcfcf8, #f3f2ea); }
    .hs-corner { flex: none; width: 8px; height: 15px; border: 1px solid #000; border-right-width: 2px; background: #fff; margin-right: 1px; }
    .hs-track { flex: 1; overflow: hidden; display: block; padding-left: 2px; }
    .hs-grip { position: absolute; left: calc(50% - 4px); top: 4px; width: 8px; height: 6px; background: repeating-linear-gradient(90deg, #8fa8dc 0 1px, transparent 1px 2px); }

    .docktabs {
      height: 20px;
      flex: none;
      margin-top: 3px;
      display: flex;
      background: #f4f2e9;
      padding-left: 4px;
      font-size: 12px;
      color: #9c9a8c;
      letter-spacing: 0.3px;
    }
    .docktabs.r { justify-content: flex-end; padding-right: 3px; }
    .dt { flex: none; width: 40px; display: flex; align-items: center; justify-content: center; position: relative; white-space: nowrap; overflow: hidden; }
    .dt + .dt::before { content: ""; position: absolute; left: 0; top: 3px; bottom: 3px; width: 1px; background: #b8b6a6; }
    .dt.wide { width: 57px; font-size: 11px; }
    .dt.on { color: #000; background: #ece9d8; border: 1px solid #8a8a78; border-top: 0; }
    .dt.on::before { display: none; }

    .mapbox { flex: none; width: 1142px; height: 690px; border: 1px solid #000; border-width: 1px 2px 1px 1px; display: flex; flex-direction: column; background: #fff; }
    .maprow { flex: 1; display: flex; min-height: 0; padding-right: 1px; }
    .canvas { flex: 1; display: block; min-width: 0; }
    .mapbox .hs { padding-left: 2px; }

    .rbody { flex: 1; padding: 7px 0 0 4px; display: flex; flex-direction: column; gap: 8px; background: #ece9d8; }
    .tasks { display: flex; align-items: center; gap: 10px; }
    .taskbtn {
      flex: none;
      width: 200px;
      height: 46px;
      display: flex;
      align-items: center;
      gap: 7px;
      padding-left: 7px;
      border: 1px solid #003c74;
      border-radius: 3px;
      background: linear-gradient(#fefefd, #f4f3ee 80%, #e6e4da);
      font-size: 12px;
    }
    .taskbtn svg { width: 24px; height: 22px; flex: none; }
    .help { width: 20px; height: 20px; display: block; flex: none; }

    .results { flex: none; margin-top: 5px; height: 233px; display: flex; flex-direction: column; }
    .results .dockhead { height: 15px; }
    .rbar { flex: none; height: 27px; display: flex; align-items: center; background: #ece9d8; }
    .rbar .icons { display: flex; align-items: center; background: #f3f1e8; height: 25px; }
    .rmain { flex: 1; display: flex; min-height: 0; }
    .rgrid { flex: 1; display: flex; flex-direction: column; min-width: 0; background: #fff; }
    .rscroll { flex: 1; min-height: 0; overflow: hidden; padding-left: 0; }
    .rvs { flex: none; width: 18px; display: flex; flex-direction: column; align-items: center; background: #fbfbf7; padding-bottom: 18px; }
    .rvs-top { flex: none; width: 16px; height: 7px; border: 1px solid #000; border-bottom-width: 2px; background: #fff; margin: 1px 0 1px; }
    .rvs .vthumb { height: 7px; margin: 1px 0 0; }

    .g-group {
      height: 22px;
      margin-left: 21px;
      display: flex;
      align-items: center;
      gap: 1px;
      font-size: 12px;
      font-weight: 700;
      color: #333;
      background: linear-gradient(#fdfdfd, #e4e4e4);
      white-space: nowrap;
    }
    .g-group.dark { border-top: 1px solid #222; height: 23px; color: #222; }
    .g-head {
      display: grid;
      height: 20px;
      margin-left: 21px;
      border-top: 1px solid #555;
      border-bottom: 1px solid #444;
      background: linear-gradient(#fdfdfd, #dedede);
      font-size: 11px;
      letter-spacing: 0.3px;
      color: #333;
    }
    .results .g-head { font-size: 12px; letter-spacing: 0.14px; }
    .hc { display: flex; align-items: center; border-right: 1px solid #444; padding: 0 2px 0 2px; overflow: hidden; white-space: nowrap; }
    .hc:last-child { border-right: 0; }
    .hc .hl { flex: 1; text-align: center; overflow: hidden; }
    .hc.end .hl { text-align: right; padding-right: 41px; }
    .hc.left .hl { text-align: left; padding-left: 5px; }
    .flt { flex: none; width: 12px; height: 10px; margin-left: 2px; }

    .g-row { display: flex; height: 21px; }
    .gut { flex: none; width: 21px; padding-left: 5px; display: flex; align-items: center; position: relative; }
    .gut::before { content: ""; position: absolute; left: 9px; top: 14px; height: 14px; border-left: 1px dotted #888; }
    .gut::after { content: ""; position: absolute; left: 15px; top: 10px; width: 6px; border-top: 1px dotted #888; }
    .gut.last::before { display: none; }
    .g-cells { display: grid; flex: none; height: 100%; }
    .gc {
      border-right: 1px solid #bcbcbc;
      border-bottom: 1px solid #bcbcbc;
      padding: 2px 0 0 6px;
      font-size: 11px;
      white-space: nowrap;
      overflow: hidden;
      display: flex;
      align-items: flex-start;
    }
    .win .gc { padding-top: 3px; }
    .rsel { background: #d8d8d8; border-right: 1px solid #bcbcbc; border-bottom: 1px solid #bcbcbc; display: flex; align-items: center; justify-content: center; }
    .tri { width: 0; height: 0; border: 5px solid transparent; border-left: 6px solid #000; border-right: 0; }
    .g-row.cur .gc { background: #3b6c8f; border-bottom-color: #3b6c8f; border-right-color: #a0b4c2; }
    .g-row.alt .gc { background: #e6f2f4; }
    .g-row.plain .gc { background: #fff; }
    .g-row.grey .gc { background: #efefef; }
    .oline { width: 85px; height: 5px; margin: 4px 0 0 2px; background: #e89a10; border: 1px solid #777; border-radius: 3px; }

    .status {
      flex: none;
      height: 17px;
      margin-top: 1px;
      display: grid;
      grid-template-columns: 1200px 20px 202px 101px 32px 35px 36px 54px;
      font-size: 11px;
    }
    .status span { display: flex; align-items: center; padding-left: 5px; border-right: 1px solid #bcbaaa; white-space: nowrap; overflow: hidden; }
    .status span:last-child { border-right: 0; padding-left: 6px; }
    .bottomline { flex: none; height: 2px; background: #3d73c8; }

    .win {
      position: absolute;
      display: flex;
      flex-direction: column;
      border: 4px solid #7e95e2;
      border-top: 0;
      border-radius: 8px 8px 0 0;
      background: #ece9d8;
    }
    .win.pipes { left: 214px; top: 153px; width: 499px; height: 600px; }
    .win.node { left: 1050px; top: 302px; width: 500px; height: 600px; border-color: #0450dc; z-index: 2; }
    .wintitle {
      flex: none;
      height: 30px;
      margin: 0 -4px;
      padding: 2px 6px 0 7px;
      border-radius: 8px 8px 0 0;
      display: flex;
      align-items: center;
      gap: 3px;
      background: linear-gradient(#8da9ea 0, #7a96df 20%, #7a96e0 70%, #7f9ce6 100%);
      font: bold 13px "Liberation Sans", Arial, sans-serif;
      letter-spacing: 0.35px;
      color: #d6e1fa;
    }
    .wintitle .wt { flex: 1; white-space: nowrap; padding-top: 1px; }
    .win.node .wintitle { background: linear-gradient(#2f7df2 0, #0758e4 18%, #0450dc 60%, #0a62ee 100%); color: #fff; text-shadow: 1px 1px 0 #0a2a80; }
    .wintitle .tbtns { gap: 4px; margin-top: -2px; }
    .wintools { flex: none; height: 24px; display: flex; align-items: center; border-bottom: 1px solid #d8d5c2; }
    .wintools .wrap { display: flex; align-items: center; background: #f3f1e8; height: 23px; }

    .attrs { flex: none; margin: 4px 3px 0 4px; border: 1px solid #000; background: #ece9d8; display: flex; flex-direction: column; }
    .attr-sym { flex: none; height: 36px; background: #fff; display: flex; align-items: center; justify-content: center; }
    .attr-sym .bar { width: 451px; height: 5px; background: #e89a10; border: 1px solid #777; border-radius: 3px; }
    .attr-sym svg { display: block; width: 24px; height: 24px; }
    .attr-grid { display: grid; gap: 2px; padding: 2px 1px 1px 1px; }
    .pipes .attr-grid { grid-template-columns: 120px 121px 117px 116px; }
    .node .attr-grid { grid-template-columns: 136px 140px 97px 100px; padding-left: 2px; }
    .lb {
      height: 16px;
      padding-left: 3px;
      display: flex;
      align-items: center;
      justify-content: space-between;
      overflow: hidden;
      white-space: nowrap;
      font-size: 12px;
      letter-spacing: 0.42px;
      color: #222;
      background: linear-gradient(#fafaf8, #dcdcda);
    }
    .node .lb { padding-left: 2px; }
    .vl { height: 16px; padding-left: 4px; display: flex; align-items: center; background: #fff; font-size: 11px; white-space: nowrap; overflow: hidden; }
    .vl.full { grid-column: span 3; }
    .pipes .attrs { height: 183px; }
    .node .attrs { height: 112px; }

    .tabgap { flex: 1; min-height: 0; border-bottom: 1px solid #fff; }
    .tabs { flex: none; display: flex; align-items: flex-end; height: 24px; gap: 1px; padding-top: 1px; }
    .tab {
      flex: none;
      height: 21px;
      display: flex;
      align-items: center;
      justify-content: center;
      font-size: 11px;
      border: 1px solid #91a7b4;
      border-bottom: 0;
      border-radius: 3px 3px 0 0;
      background: linear-gradient(#fff, #f0eee2);
    }
    .tab.on { height: 23px; background: #fdfdfc; border: 0; border-top: 2px solid #e68b2c; padding-bottom: 2px; }
    .tab-rury { width: 99px; }
    .tab-punkt { width: 97px; }
    .tab-small { width: 38px; }
    .tabpanel { flex: none; margin-right: 2px; border: 1px solid #91a7b4; border-top: 0; display: flex; flex-direction: column; }
    .pipes .tabpanel { height: 260px; }
    .node .tabpanel { height: 331px; margin-left: 1px; }
    .node .tabs { padding-left: 1px; }
    .ptools { flex: none; height: 24px; display: flex; align-items: center; background: #ece9d8; border-bottom: 1px solid #9a9a9a; }
    .node .ptools { padding-top: 2px; }
    .pbody { flex: 1; min-height: 0; background: #fff; overflow: hidden; padding-top: 2px; }
    .winfoot { flex: none; height: 39px; display: flex; justify-content: flex-end; align-items: flex-start; gap: 9px; padding: 10px 6px 0 0; }
    .xpbtn {
      width: 72px;
      height: 21px;
      border: 1px solid #003c74;
      border-radius: 3px;
      background: linear-gradient(#fff, #f3f2ea 70%, #dcd8c8);
      display: flex;
      align-items: center;
      justify-content: center;
      font-size: 11.5px;
    }
    .xpbtn.def { box-shadow: inset 0 0 0 2px #a8c4f0; width: 73px; }
  `;

  private win1() {
    return html`<section class="win pipes">
      <header class="wintitle">${ic("appwin")}<span class="wt">Ciągi kanalizacyjne - test, 9999, 2, 20, ,</span>${titleButtons(false)}</header>
      <div class="wintools"><div class="wrap">${tools(WIN_TOOLS_A)}</div></div>
      <div class="attrs">
        <div class="attr-sym"><i class="bar"></i></div>
        <div class="attr-grid">
          ${PIPE_FORM.map((r) => html`<div class="lb">${r[0]}</div><div class="vl">${r[1]}</div><div class="lb">${r[2]}</div><div class="vl">${r[3]}</div>`)}
          <div class="lb">Osoba edytująca</div><div class="vl full"></div>
        </div>
      </div>
      <div class="tabgap"></div>
      <div class="tabs">
        <span class="tab on tab-rury">Rury wchodzące</span>
        <span class="tab tab-punkt">Punkt wchodzący</span>
        <span class="tab tab-small">Pliki</span>
        <span class="tab tab-small">Linki</span>
      </div>
      <div class="tabpanel">
        <div class="ptools">${tools(TAB_TOOLS_DIS)}</div>
        <div class="pbody">
          <div class="g-group">${ic("pipe")}Ciągi kanalizacyjne</div>
          ${gridHead(PIPE_COLS, 17)}
        </div>
        ${scrollH(0, 97)}
      </div>
      <div class="winfoot"><span class="xpbtn">Zapisz</span><span class="xpbtn def">Anuluj</span></div>
    </section>`;
  }

  private win2() {
    return html`<section class="win node">
      <header class="wintitle">${ic("appwin")}<span class="wt">Kanalizacja - , , ,</span>${titleButtons(true)}</header>
      <div class="wintools"><div class="wrap">${tools(WIN_TOOLS_B)}</div></div>
      <div class="attrs">
        <div class="attr-sym"><svg viewBox="0 0 24 24"><circle cx="12" cy="12" r="11" fill="#a87000" stroke="#f0c878"/><path d="M12 1v22M1 12h22" stroke="#f0e0b0" stroke-width="1.400"/></svg></div>
        <div class="attr-grid">
          ${NODE_FORM.map((r) => html`<div class="lb">${r[0]}</div><div class="vl"></div><div class="lb">${r[2]}</div><div class="vl">${r[3]}</div>`)}
          <div class="lb">Numer rury wychod<svg width="10" height="8" viewBox="0 0 10 8"><path d="M5 1L1 7h8z" fill="#fff" stroke="#ccc"/></svg></div><div class="vl"></div>
        </div>
      </div>
      <div class="tabgap"></div>
      <div class="tabs">
        <span class="tab on tab-rury">Rury wchodzące</span>
        <span class="tab tab-small">Pliki</span>
        <span class="tab tab-small">Linki</span>
      </div>
      <div class="tabpanel">
        <div class="ptools">${tools(TAB_TOOLS_ON)}</div>
        <div class="pbody">
          <div class="g-group">${ic("pipe")}Ciągi kanalizacyjne</div>
          ${gridHead(PIPE_COLS, 17)}
          ${gridRow(PIPE_COLS, 17, [orangeLine, "test", "9999", ""], "plain", true, false)}
          ${gridRow(PIPE_COLS, 17, [orangeLine, "test", "9990", ""], "grey", false, true)}
        </div>
        ${scrollH(0, 97)}
      </div>
      <div class="winfoot"><span class="xpbtn">Zapisz</span><span class="xpbtn def">Anuluj</span></div>
    </section>`;
  }

  private mapCanvas() {
    const x0 = 291, y0 = 104;
    return html`<svg class="canvas" viewBox="${x0} ${y0} 1123 671" preserveAspectRatio="none">
      <defs>
        <pattern id="worker" patternUnits="userSpaceOnUse" x="1300" y="103" width="15.700" height="15.700">
          <path d="M1 14L7.500 5l6.500 9z" fill="#d4d4d4"/>
          <circle cx="7.500" cy="4" r="2.200" fill="#000"/>
          <path d="M3 8.500h4l1-2 2 4h3M1.500 12.500h4l1.500-3 3 4" fill="none" stroke="#000" stroke-width="1.500"/>
        </pattern>
      </defs>
      <path d="M1295 104H1414V360L1323 163z" fill="#808080"/>
      <path d="M1295 104L1323 163L1414 133V104z" fill="url(#worker)"/>
      <path d="M1295 104L1323 163" stroke="#e8e8e8"/>
      <path d="M1323 163L1414 133" stroke="#a4a4a4"/>
      <path d="M1354 104L1414 235" stroke="#ff3010" stroke-width="4"/>
      <g fill="none" stroke-linecap="round">
        <path d="M741 179L921 425L1126 161M921 425L949 742" stroke="#666" stroke-width="6"/>
        <path d="M741 179L921 425L1126 161M921 425L949 742" stroke="#e89a10" stroke-width="3.600"/>
      </g>
      ${[[921, 425], [949, 742]].map(([x, y]) => svg`<circle cx=${x} cy=${y} r="7" fill="#b07800" stroke="#f4d080"/><path d="M${x} ${y - 7}v14M${x - 7} ${y}h14" stroke="#f4e4b8" stroke-width="1"/>`)}
    </svg>`;
  }

  render() {
    return html`<div class="shell">
      <header class="titlebar">${ic("bridge")}<span class="apptitle">Moduł ewidencji dróg i obiektów mostowych</span>${titleButtons(false, true)}</header>
      <nav class="menubar">${MENU.map((m) => html`<span>${m}</span>`)}</nav>

      <div class="toolrow tr1">
        ${tools([":10", "print", "|5", "dl", "_8"])}
        <div class="combo zoomc"><span>1:356</span><i class="cb">${chevron("down")}</i></div>
        ${tools([":11", "zin", "zout", "fin", "fout", "hand", "globe", "back", "fwd", "info", "xy", "ruler", "refresh", ":12", "~zin", "~zout", "~hand", "|5", "~fin", "~fout", "~box4", "~one", "|8", "~prev", "~next", "_1"])}
        <div class="combo pct"><span>100%</span><i class="cb">${chevron("down")}</i></div>
        ${tools([":11", "selcur", "selsq", ":12", "gis", "|4", "_8"])}
        <span class="tl tl-active">Aktywna gmina</span>
        ${tools(["_11"])}
        <span class="tl tl-commune">Wodzisław Śląski -</span>
        ${tools(["_24", "|4", "_2", "lens", "|6", "*poly"])}
      </div>

      <div class="toolrow tr2">
        ${tools([":10", "_8"])}
        <span class="tl tl-editor">Editor ▾</span>
        ${tools(["_6", "|4", "_3", "arrow", "pencil"])}
        <span class="lab task">Task:</span>
        <div class="dd task"><span>Create Tasks : Create New Featu</span><b></b></div>
        ${tools(["|8"])}
        <span class="lab target">Target:</span>
        <div class="dd target"><span>Decyzje zajętości pasa drogoweg</span><b></b></div>
        ${tools(["|5", "table", "|5", "chart", "|5", "zin", "^", ":8", "_4", "*list1", "_6", "*pink", "_4", "ring", "*table", "_8", "undo", "redo", "save", "|", "wingreen", "|", "winlist", "|", "*info", "|4", "_6"])}
        <span class="tl tl-add">Dodaj ▾</span>
      </div>
      <div class="tool-row-gap"></div>

      <div class="dockrow">
        <aside class="panel left">
          <div class="dockhead"><span>Zawartość</span>${dockBtns}</div>
          <div class="treebox">
            <div class="tree">
              <div class="tr layers-row"><i class="exp">−</i><svg class="ic" viewBox="0 0 16 16"><path d="M1 6l4-4h10l-4 4zM1 9.500l4-4h10l-4 4zM1 13l4-4h10l-4 4z" fill="#ffee30" stroke="#111" stroke-width=".9"/></svg><span class="layers-name">Layers</span></div>
              ${TREE.map(treeRow)}
            </div>
            <div class="vs"><span class="sb-btn">${chevron("up")}</span><span class="sb-thumb vthumb"></span><span class="sb-fill"></span><span class="sb-btn">${chevron("down")}</span></div>
          </div>
          <div class="docktabs">${DOCK_TABS.map((t, i) => html`<span class="dt ${i === 0 ? "on" : ""}">${t}</span>`)}</div>
        </aside>

        <main class="mapbox">
          <div class="maprow">
            ${this.mapCanvas()}
            <div class="vs"><span class="sb-btn">${chevron("up")}</span><span class="sb-fill"></span><span class="sb-btn">${chevron("down")}</span></div>
          </div>
          ${scrollH(677, 6, false)}
        </main>

        <aside class="panel right">
          <div class="dockhead"><span>Narzędzia zajetości pasa drogowego</span>${dockBtns}</div>
          <div class="rbody">
            <div class="tasks"><div class="taskbtn"><svg viewBox="0 0 24 22">${TASK_ICONS.content}</svg><span>Zawartość</span></div>${HELP}</div>
            <div class="tasks"><div class="taskbtn"><svg viewBox="0 0 24 22">${TASK_ICONS.search}</svg><span>Okno wyszukiwania</span></div>${HELP}</div>
            <div class="tasks"><div class="taskbtn"><svg viewBox="0 0 24 22">${TASK_ICONS.sel}</svg><span>Pokaż okno selekcji</span></div>${HELP}</div>
            <div class="tasks"><div class="taskbtn"><svg viewBox="0 0 24 22">${TASK_ICONS.add}</svg><span>Dodaj decyzję zajętości</span></div>${HELP}</div>
          </div>
          <div class="docktabs r"><span class="dt wide">...</span><span class="dt wide">Narzędzi...</span><span class="dt wide on">Narzędzi...</span></div>
        </aside>
      </div>

      <section class="results">
        <div class="dockhead"><span>Wyniki</span>${dockBtns}</div>
        <div class="rbar"><div class="icons">${tools(RESULT_TOOLS)}</div></div>
        <div class="rmain">
          <div class="rgrid">
            <div class="rscroll">
              <div class="g-group dark">${ic("road")}Odcinki dróg</div>
              ${gridHead(ROAD_COLS, 17)}
              ${ROAD_ROWS.map((r, i) => gridRow(ROAD_COLS, 17, r, i === 0 ? "cur" : i % 2 ? "alt" : "plain", i === 0, false))}
            </div>
            ${scrollH(0, 550)}
          </div>
          <div class="rvs"><i class="rvs-top"></i><span class="sb-btn">${chevron("up")}</span><span class="sb-thumb vthumb"></span><span class="sb-fill"></span><span class="sb-btn">${chevron("down")}</span></div>
        </div>
      </section>

      <footer class="status">
        <span></span><span></span>
        <span>6525842.576 5539166.092 Meters</span>
        <span>Size:</span><span>CAP</span><span>NUM</span><span>SCRL</span><span>11:24:24</span>
      </footer>
      <div class="bottomline"></div>
    </div>
    ${this.win1()}
    ${this.win2()}`;
  }
}
